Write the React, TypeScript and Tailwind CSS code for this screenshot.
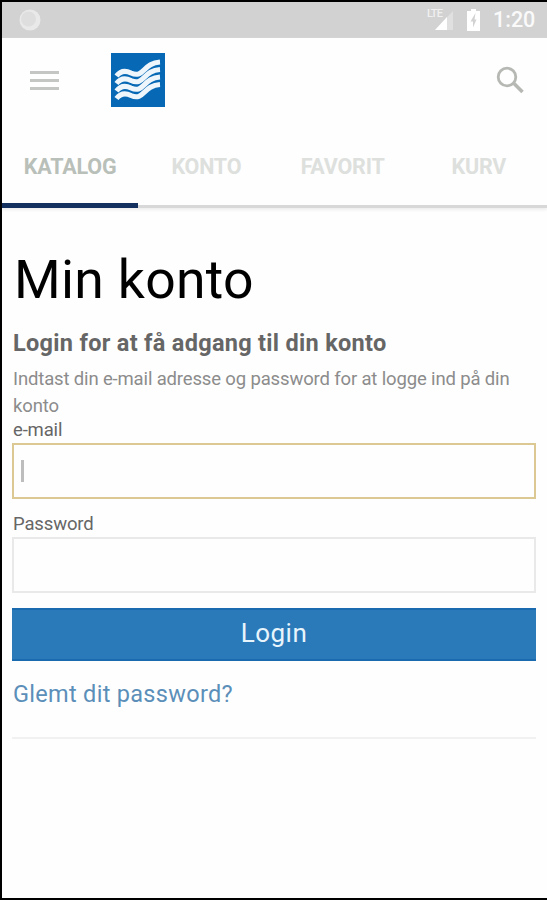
import { FC } from "react";
import { clsx } from "clsx";

const tabs = [
  { label: "KATALOG", active: true },
  { label: "KONTO", active: false },
  { label: "FAVORIT", active: false },
  { label: "KURV", active: false },
];

const StatusBar: FC = () => (
  <div className="flex h-9 items-center bg-[#d2d2d2] pr-3 pl-[17px] text-[#fafafa]">
    <svg width="22" height="22" viewBox="0 0 22 22">
      <circle cx="11" cy="11" r="10.5" fill="#e9e9e9" />
      <circle cx="9.5" cy="10" r="7.5" fill="#dedede" />
    </svg>
    <div className="ml-auto flex">
      <span className="-mr-[14px] h-3 w-[15px] text-[11px] leading-3 font-medium tracking-[-0.8px] text-[#f0f0f0]">
        LTE
      </span>
      <svg width="26" height="24" viewBox="0 0 26 24">
        <path d="M25 3v19H7z" fill="#e0e0e0" />
        <path d="M19 9v13H7z" fill="#fff" />
      </svg>
    </div>
    <svg className="ml-[13px]" width="13" height="24" viewBox="0 0 13 24">
      <path d="M4 1h5v2h4v20H0V3h4z" fill="#fff" />
      <path d="M8.500 5 3.500 13.500h2.500v6l3.500-8H7.500z" fill="#d2d2d2" />
    </svg>
    <span className="ml-[13px] w-[42px] text-[21.500px] leading-9 font-medium whitespace-nowrap">
      1:20
    </span>
  </div>
);

const Logo: FC = () => (
  <svg width="54" height="54" viewBox="0 0 54 54">
    <rect width="54" height="54" fill="#0768b5" />
    <g fill="none" stroke="#eef6fc" strokeWidth="5">
      <path d="M5.500 23C10 17 15 17.500 20 20C33 26 32 10 49 9" />
      <path d="M5.500 30.500C10 24.500 15 25 20 27.500C33 33.500 32 17.500 49 16.500" />
      <path d="M5.500 38C10 32 15 32.500 20 35C33 41 32 25 49 24" />
      <path d="M5.500 45.500C10 39.500 15 40 20 42.500C33 48.500 32 32.500 49 31.500" />
    </g>
  </svg>
);

const Header: FC = () => (
  <header className="h-[170px] border-b-[3px] border-[#d8d8d8] shadow-[0_2px_3px_#eeeeee]">
    <div className="flex h-[84px] items-center pr-[22px] pl-7">
      <button className="flex w-[29px] flex-col gap-[5px]">
        <span className="h-[3px] bg-[#c3c6c3]" />
        <span className="h-[3px] bg-[#c3c6c3]" />
        <span className="h-[3px] bg-[#c3c6c3]" />
      </button>
      <div className="ml-[52px]">
        <Logo />
      </div>
      <button className="ml-auto">
        <svg width="29" height="28" viewBox="0 0 29 28" fill="none" stroke="#b5b8b3">
          <circle cx="11" cy="11" r="8.800" strokeWidth="2.800" />
          <path d="m18 17.500 8.500 8.500" strokeWidth="3.500" />
        </svg>
      </button>
    </div>
    <nav className="grid h-[86px] grid-cols-4">
      {tabs.map((tab) => (
        <div
          key={tab.label}
          className={clsx(
            "border-b-[5px] pt-[31px] text-center text-[21.500px] leading-7 font-bold tracking-[-0.2px]",
            tab.active
              ? "border-[#14305f] text-[#b9bfb9]"
              : "border-transparent text-[#dde0dd]"
          )}
        >
          {tab.label}
        </div>
      ))}
    </nav>
  </header>
);

const App: FC = () => {
  return (
    <div className="h-[900px] w-[547px] overflow-hidden border-t-2 border-b-2 border-l-2 border-black bg-[#fefefe] font-[Roboto,sans-serif]">
      <StatusBar />
      <Header />
      <main className="pr-[11px] pl-[10px]">
        <h1 className="pt-[39px] pl-[2px] text-[53.500px] leading-[66px] tracking-[0.3px] text-black">
          Min konto
        </h1>
        <h2 className="mt-[14px] pl-px text-[23.500px] leading-8 font-bold tracking-[0.3px] text-[#666]">
          Login for at få adgang til din konto
        </h2>
        <p className="mt-[7px] pl-px text-[18.500px] leading-[27px] tracking-[-0.15px] text-[#8c8c8c]">
          Indtast din e-mail adresse og password for at logge ind på din konto
        </p>
        <label className="block pb-[2px] pl-px text-[18.500px] leading-[21px] tracking-[-0.15px] text-[#666]">
          e-mail
        </label>
        <div className="flex h-14 items-center border-2 border-[#dcc892] bg-[#fefefe] pl-[7px]">
          <span className="h-[22px] w-[3px] bg-[#bdbdbd]" />
        </div>
        <label className="mt-[12px] block pl-px text-[18.500px] leading-[26px] tracking-[-0.15px] text-[#666]">
          Password
        </label>
        <div className="h-14 border-2 border-[#e9e9e9] bg-[#fefefe]" />
        <button className="mt-[15px] block h-[53px] w-full border-y-2 border-[#196aae] bg-[#2a7aba] pb-[2px] text-[26px] leading-[47px] tracking-[0.5px] text-[#e8f4fc]">
          Login
        </button>
        <a className="mt-[17px] block pl-px text-[23.500px] leading-8 tracking-[0.3px] text-[#5b8fb9]">
          Glemt dit password?
        </a>
        <hr className="mt-[27px] border-t-2 border-[#f1f1f1]" />
      </main>
    </div>
  );
};

export default App;
